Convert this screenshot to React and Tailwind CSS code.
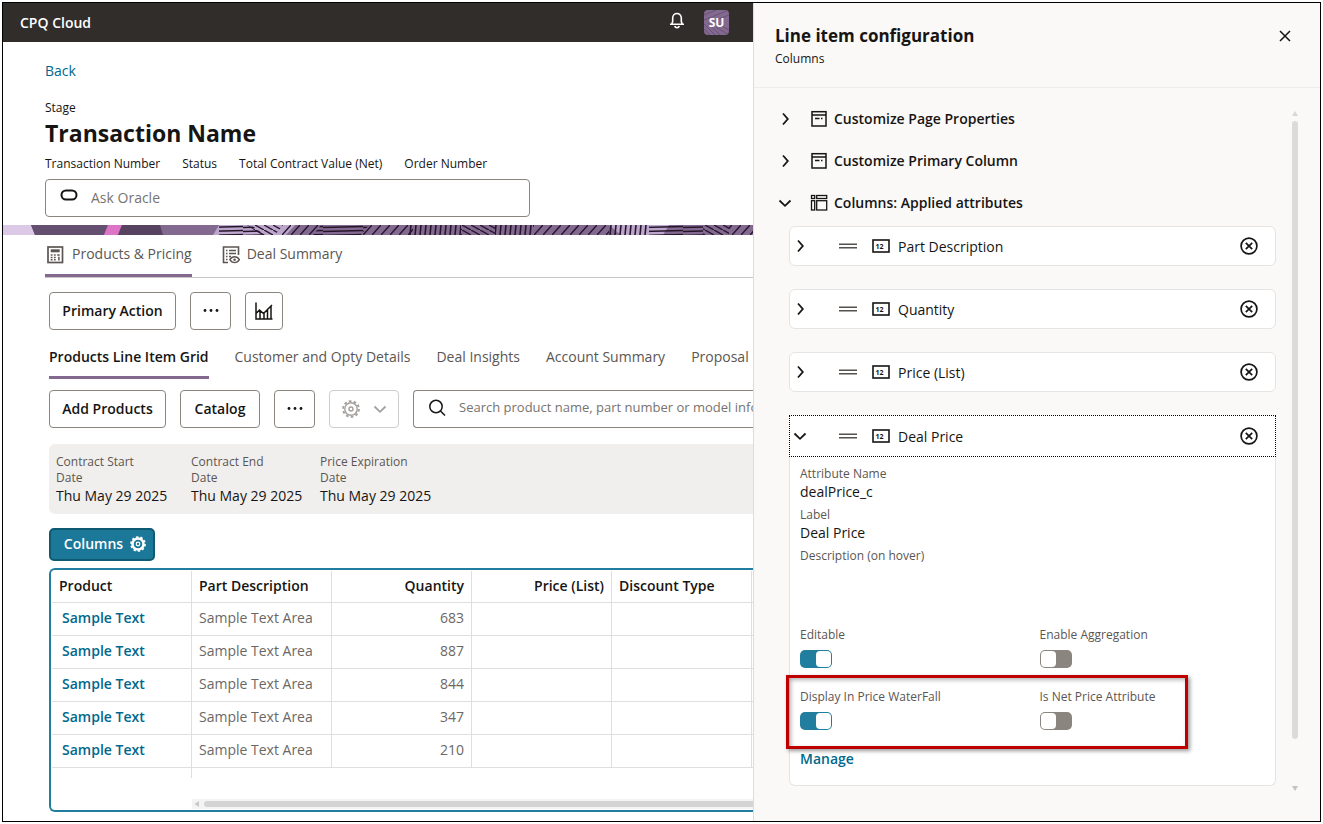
import { useState } from 'react';

const LINE_ITEMS = [683, 887, 844, 347, 210];

const DATES = [
  { label: 'Contract Start Date', value: 'Thu May 29 2025' },
  { label: 'Contract End Date', value: 'Thu May 29 2025' },
  { label: 'Price Expiration Date', value: 'Thu May 29 2025' },
];

const SUB_TABS = [
  'Products Line Item Grid',
  'Customer and Opty Details',
  'Deal Insights',
  'Account Summary',
  'Proposal',
];

function ChevronIcon({ open, className = '' }) {
  return (
    <svg viewBox="0 0 14 14" className={`w-[14px] h-[14px] shrink-0 ${className}`} fill="none" stroke="currentColor" strokeWidth="1.8">
      <path d={open ? 'M1.5 4.5 7 9.8l5.5-5.3' : 'M5 1.5 9.800 7 5 12.500'} />
    </svg>
  );
}

function GearIcon({ className, ring = 1.4 }) {
  return (
    <svg viewBox="0 0 18 18" className={className} fill="none" stroke="currentColor">
      <circle cx="9" cy="9" r="7.9" strokeWidth="1.9" strokeDasharray="2.7 2.264" />
      <circle cx="9" cy="9" r="6.2" strokeWidth={ring} />
      <circle cx="9" cy="9" r="2" strokeWidth="1.4" />
    </svg>
  );
}

function MoreIcon() {
  return (
    <svg viewBox="0 0 18 18" className="w-[18px] h-[18px]" fill="currentColor">
      <circle cx="3" cy="8.5" r="1.4" />
      <circle cx="9" cy="8.5" r="1.4" />
      <circle cx="15" cy="8.5" r="1.4" />
    </svg>
  );
}

function ChartIcon() {
  return (
    <svg viewBox="0 0 18 18" className="w-[18px] h-[18px]" fill="none" stroke="currentColor" strokeWidth="1.5">
      <path d="M1 .5V17h16.5M1 11.5l3.5-3.5 4 3.5L17 3M5 8.5V17M9 11v6M12.500 8v9M16 4v13" />
    </svg>
  );
}

function CalculatorIcon() {
  return (
    <svg viewBox="0 0 18 18" className="w-[18px] h-[18px]" fill="none" stroke="currentColor">
      <rect x="2" y="1" width="14.5" height="15.5" strokeWidth="1.7" />
      <rect x="4.700" y="3.300" width="9" height="3" fill="currentColor" stroke="none" />
      <path d="M4.700 9h1.800M7.900 9h1.800M4.700 11.400h1.800M7.900 11.400h1.800M4.700 13.800h1.800M7.900 13.800h1.800M11.200 9h2.500M12.900 10.800v3.800" strokeWidth="1.500" />
    </svg>
  );
}

function SummaryIcon() {
  return (
    <svg viewBox="0 0 18 18" className="w-[18px] h-[18px]" fill="none" stroke="currentColor" strokeWidth="1.6">
      <path d="M6 16.500H1.500V1h15v8" />
      <path d="M4 4.500h1.500M7 4.500h7M4 7.500h1.500M7 7.500h7M4 10.500h1.500M7 10.500h2M4 13.500h1.500" strokeWidth="1.500" />
      <path d="M7.800 13.700c1.300-2 2.900-2.900 4.800-2.900s3.500.9 4.800 2.900c-1.300 2-2.900 2.900-4.800 2.900s-3.500-.9-4.800-2.900z" strokeWidth="1.400" />
      <circle cx="12.600" cy="13.700" r="1.300" fill="currentColor" stroke="none" />
    </svg>
  );
}

function PageIcon() {
  return (
    <svg viewBox="0 0 18 18" className="w-[18px] h-[18px] shrink-0" fill="none" stroke="currentColor" strokeWidth="1.5">
      <rect x="2" y="1.700" width="14" height="14.300" />
      <path d="M2 5h14M5 8.500h4.500M11 8.500h1.500" />
    </svg>
  );
}

function ColumnsIcon() {
  return (
    <svg viewBox="0 0 18 18" className="w-[18px] h-[18px] shrink-0" fill="none" stroke="currentColor" strokeWidth="1.3">
      <rect x="1.500" y="1.500" width="3.200" height="3" />
      <rect x="1.500" y="6.700" width="3.200" height="9.300" />
      <rect x="6.700" y="1.500" width="10" height="3" />
      <rect x="6.700" y="6.700" width="10" height="9.300" />
    </svg>
  );
}

function NumberIcon() {
  return (
    <svg viewBox="0 0 18 14" className="w-[18px] h-[14px] shrink-0">
      <rect x="1" y="1" width="16" height="12" fill="none" stroke="currentColor" strokeWidth="1.6" />
      <text x="3.500" y="9.500" fontSize="7" fontWeight="700" fill="currentColor">12</text>
    </svg>
  );
}

function BannerStrip() {
  return (
    <svg className="block w-full h-[10px]" viewBox="0 0 750 10" preserveAspectRatio="xMinYMin slice">
      <defs>
        <pattern id="slant" width="9" height="10" patternUnits="userSpaceOnUse">
          <path d="M0 10 9 0" stroke="#24152b" strokeWidth="1.5" />
        </pattern>
        <pattern id="upright" width="5" height="10" patternUnits="userSpaceOnUse">
          <path d="M2 10 3 0" stroke="#24152b" strokeWidth="1.6" />
        </pattern>
        <pattern id="flat" width="40" height="4" patternUnits="userSpaceOnUse">
          <path d="M0 2.500 40 1.500" stroke="#24152b" strokeWidth="1.3" />
        </pattern>
        <pattern id="back" width="9" height="5" patternUnits="userSpaceOnUse">
          <path d="M0 0 9 5" stroke="#24152b" strokeWidth="1.4" />
        </pattern>
      </defs>
      <rect width="750" height="10" fill="#83688f" />
      <path d="M0 0h28l4 10H0z" fill="#dcc9e6" />
      <path d="M28 0h77l-4 10H32z" fill="#654f70" />
      <path d="M105 0h14l-4 10h-14z" fill="#dd75c6" />
      <path d="M119 0h38l3 10h-45z" fill="#574360" />
      <path d="M216 0h76l-9 10h-73z" fill="#bda6cb" />
      <path d="M216 0h32l14 10h-46z" fill="url(#flat)" />
      <path d="M244 0h36l-8 10h-14z" fill="url(#back)" />
      <path d="M280 0h38l-8 10h-38z" fill="url(#slant)" />
      <path d="M318 0h48l-8 10h-48z" fill="url(#flat)" />
      <path d="M366 0h44v10h-52z" fill="url(#slant)" />
      <path d="M404 0h54v10h-54z" fill="url(#upright)" />
      <path d="M458 0h34v10h-34z" fill="url(#back)" />
      <path d="M492 0h38v10h-38z" fill="url(#upright)" />
      <path d="M530 0h76v10h-76z" fill="url(#slant)" />
      <path d="M606 0h60l-6 10h-42z" fill="#bda6cb" />
      <path d="M606 0h40v10h-40z" fill="url(#upright)" />
      <path d="M646 0h54v10h-54z" fill="url(#flat)" />
      <path d="M700 0h26v10h-26z" fill="url(#back)" />
      <path d="M726 0h24v10h-24z" fill="url(#slant)" />
    </svg>
  );
}

function OutlineButton({ label, className = '', children }) {
  return (
    <button
      aria-label={label}
      className={`h-[38px] pb-px shrink-0 flex items-center justify-center rounded border border-[#8b8580] bg-white font-semibold ${className}`}
    >
      {children}
    </button>
  );
}

function AppHeader() {
  return (
    <header className="h-[39px] flex items-center bg-[#312d2a] text-white pl-[17px] pr-6">
      <span className="font-semibold flex-1">CPQ Cloud</span>
      <button aria-label="Notifications" className="mr-[18px] mb-1">
        <svg viewBox="0 0 18 18" className="w-[18px] h-[18px]" fill="none" stroke="currentColor" strokeWidth="1.6">
          <path d="M2 12.300h14M3.800 12.300l.9-3V5.800a4.300 4.300 0 0 1 8.600 0v3.500l.9 3M6.700 14a2.400 2.400 0 0 0 4.600 0" />
        </svg>
      </button>
      <button className="relative w-[25px] h-[25px] rounded bg-[#83688f] text-[12px] font-bold overflow-hidden">
        <svg viewBox="0 0 25 25" className="absolute inset-0" fill="none" stroke="#6a5275" strokeWidth="1">
          <path d="M0 5 12 0M0 10 25 0M12 10l13-5M0 14l11 11M0 19l6 6M4 13l12 12M12 17l13 8M14 14l11 6" />
        </svg>
        <span className="relative">SU</span>
      </button>
    </header>
  );
}

function LineItemTable() {
  const cell = 'border-r border-b border-[#e1dfdd] pt-0 pb-[3px] px-[7px]';
  const head = 'border-r border-b border-[#e1dfdd] pt-0 pb-[2px] px-[7px] font-semibold';
  return (
    <div className="mt-[7px] ml-1 h-[244px] border-2 border-r-0 border-[#227e9e] rounded-l-md p-px pr-0 flex flex-col overflow-hidden">
      <table className="w-[840px] table-fixed border-separate border-spacing-0 shrink-0">
        <thead>
          <tr className="h-8 text-left">
            <th className={head}>Product</th>
            <th className={head}>Part Description</th>
            <th className={`${head} text-right`}>Quantity</th>
            <th className={`${head} text-right`}>Price (List)</th>
            <th className={head}>Discount Type</th>
            <th className={head} />
          </tr>
        </thead>
        <tbody className="text-[#6b6864]">
          {LINE_ITEMS.map((quantity) => (
            <tr key={quantity} className="h-[33px]">
              <td className={`${cell} pl-[10px]`}>
                <a href="#item" className="font-semibold text-[#00688c]">Sample Text</a>
              </td>
              <td className={cell}>Sample Text Area</td>
              <td className={`${cell} text-right`}>{quantity}</td>
              <td className={cell} />
              <td className={cell} />
              <td className={cell} />
            </tr>
          ))}
        </tbody>
      </table>
      <div className="w-[140px] h-[10px] border-r border-[#e1dfdd]" />
      <div className="mt-auto ml-[140px] h-[10px] flex items-center bg-[#f4f4f4]">
        <svg viewBox="0 0 12 10" className="w-3 h-[10px] shrink-0" fill="#c8c8c8">
          <path d="M7 2v6L2.500 5z" />
        </svg>
        <div className="flex-1 h-[6px] rounded-l-full bg-[#d4d4d4]" />
      </div>
    </div>
  );
}

function TransactionPage() {
  return (
    <main className="pt-[19px] pb-[9px]">
      <div className="pl-[42px]">
        <a href="#back" className="block w-fit leading-5 font-medium text-[#00688c]">Back</a>
        <div className="mt-[18px] text-[12px] leading-[18px] font-medium">Stage</div>
        <h1 className="text-[23px] leading-8 font-bold">Transaction Name</h1>
        <div className="mt-[6px] flex gap-[22px] text-[12px] leading-[18px]">
          <span>Transaction Number</span>
          <span>Status</span>
          <span>Total Contract Value (Net)</span>
          <span>Order Number</span>
        </div>
        <label className="mt-[6px] w-[485px] max-w-full h-[38px] pb-[2px] flex items-center rounded border border-[#8b8580] pl-[14px] gap-[13px]">
          <svg viewBox="0 0 18 12" className="w-[18px] h-3 mb-1" fill="none" stroke="currentColor" strokeWidth="2">
            <rect x="1.5" y="1.5" width="15" height="9" rx="4.5" />
          </svg>
          <input aria-label="Ask Oracle" placeholder="Ask Oracle" className="flex-1 outline-none placeholder:text-[#77736f]" />
        </label>
      </div>

      <div className="mt-2"><BannerStrip /></div>

      <div className="pl-[42px]">
        <nav className="flex gap-[30px] border-b border-[#c9c7c5] font-medium text-[#5b5652]">
          <a href="#products" className="h-[42px] pt-[9px] flex items-start gap-2 border-b-3 border-[#83688f]">
            <span className="pl-px pt-[2px]"><CalculatorIcon /></span>
            <span className="leading-5">Products &amp; Pricing</span>
          </a>
          <a href="#summary" className="h-[42px] pt-[9px] flex items-start gap-[7px]">
            <span className="pt-[2px]"><SummaryIcon /></span>
            <span className="leading-5">Deal Summary</span>
          </a>
        </nav>

        <div className="mt-[14px] ml-1 flex gap-[14px]">
          <OutlineButton className="w-[127px]">Primary Action</OutlineButton>
          <OutlineButton label="More actions" className="w-[41px]"><MoreIcon /></OutlineButton>
          <OutlineButton label="Price chart" className="w-[38px]"><ChartIcon /></OutlineButton>
        </div>

        <nav className="mt-[17px] ml-1 flex gap-[26px] leading-5 whitespace-nowrap">
          {SUB_TABS.map((tab, i) => (
            <a
              key={tab}
              href="#tab"
              className={i === 0
                ? 'pb-[9px] border-b-3 border-[#83688f] font-semibold'
                : 'pb-[9px] border-b-3 border-transparent font-medium text-[#5b5652]'}
            >
              {tab}
            </a>
          ))}
        </nav>

        <div className="mt-[11px] ml-1 flex gap-[14px]">
          <OutlineButton className="w-[117px]">Add Products</OutlineButton>
          <OutlineButton className="w-20">Catalog</OutlineButton>
          <OutlineButton label="More actions" className="w-[41px]"><MoreIcon /></OutlineButton>
          <button aria-label="Grid settings" disabled className="w-[70px] h-[38px] shrink-0 flex items-center justify-center gap-[13px] rounded border border-[#d0cecc] text-[#a3a09d]">
            <GearIcon className="w-[18px] h-[18px]" />
            <ChevronIcon open />
          </button>
          <label className="flex-1 min-w-0 h-[38px] pb-[2px] flex items-center gap-[13px] rounded-l border border-r-0 border-[#8b8580] pl-[14px] overflow-hidden">
            <svg viewBox="0 0 18 18" className="w-[18px] h-[18px] shrink-0" fill="none" stroke="currentColor" strokeWidth="1.5">
              <circle cx="8" cy="7.5" r="6.2" />
              <path d="m12.500 12 4.500 4.500" />
            </svg>
            <input
              aria-label="Search products"
              placeholder="Search product name, part number or model information"
              className="flex-1 min-w-0 text-[13px] outline-none placeholder:text-[#77736f]"
            />
          </label>
        </div>

        <dl className="mt-4 ml-1 h-[70px] grid grid-cols-[135px_129px_auto] rounded-l-md bg-[#f1efed] pt-[10px] pl-[7px]">
          {DATES.map(({ label, value }) => (
            <div key={label}>
              <dt className="max-w-[100px] text-[12px] leading-4 text-[#5b5652]">{label}</dt>
              <dd className="leading-5">{value}</dd>
            </div>
          ))}
        </dl>

        <button className="mt-[14px] ml-1 w-[106px] h-[33px] pl-[6px] pb-[2px] flex items-center justify-center gap-[7px] rounded-[5px] border-2 border-[#0f5a73] bg-[#1b7898] text-white font-semibold">
          Columns
          <GearIcon className="w-4 h-4" ring="2.8" />
        </button>

        <LineItemTable />
      </div>
    </main>
  );
}

function Section({ icon, title, open }) {
  return (
    <button aria-expanded={open} className="h-[42px] pb-px flex items-center text-left pl-6">
      <ChevronIcon open={open} />
      <span className="ml-[18px] mr-[6px]">{icon}</span>
      <span className="font-semibold">{title}</span>
    </button>
  );
}

function AttributeRow({ name, open, className }) {
  return (
    <div className={`flex items-center pl-[3px] pr-[17px] bg-white ${className}`}>
      <button aria-label={`Toggle ${name}`} aria-expanded={open}><ChevronIcon open={open} /></button>
      <svg viewBox="0 0 18 6" className="ml-8 w-[18px] h-[6px] mb-px" stroke="#55514e" strokeWidth="1.5">
        <path d="M0 1.300h18M0 4.800h18" />
      </svg>
      <span className="ml-[15px]"><NumberIcon /></span>
      <span className="ml-2 flex-1">{name}</span>
      <button aria-label={`Remove ${name}`}>
        <svg viewBox="0 0 18 18" className="w-[18px] h-[18px]" fill="none" stroke="currentColor" strokeWidth="1.7">
          <circle cx="9" cy="9" r="7.9" />
          <path d="m5.800 5.800 6.400 6.400M12.200 5.800l-6.400 6.400" />
        </svg>
      </button>
    </div>
  );
}

function Switch({ id, label, defaultOn = false }) {
  const [on, setOn] = useState(defaultOn);
  return (
    <div className="flex flex-col items-start">
      <label htmlFor={id} className="text-[12px] leading-[18px] font-medium text-[#5b5652]">{label}</label>
      <input
        id={id}
        type="checkbox"
        role="switch"
        checked={on}
        onChange={(e) => setOn(e.target.checked)}
        className="mt-[6px] block w-8 h-[18px] appearance-none rounded-[5px] bg-[#8b8580] p-px checked:bg-[#227e9e] before:block before:w-[15px] before:h-4 before:rounded before:bg-white checked:before:ml-auto"
      />
    </div>
  );
}

function Detail({ label, value }) {
  return (
    <div className="leading-[18px]">
      <dt className="text-[12px] font-medium text-[#5b5652]">{label}</dt>
      <dd className="min-h-[18px]">{value}</dd>
    </div>
  );
}

function ConfigPanel() {
  return (
    <aside className="w-[567px] shrink-0 flex flex-col border-l border-[#dedbd8] bg-[#faf9f8]">
      <div className="h-[85px] flex justify-between items-start border-b border-[#efedeb] pt-5 pl-[21px] pr-7">
        <div>
          <h2 className="text-[17px] leading-[26px] font-bold">Line item configuration</h2>
          <p className="text-[12px] leading-5">Columns</p>
        </div>
        <button aria-label="Close" className="mt-[6px]">
          <svg viewBox="0 0 14 14" className="w-[14px] h-[14px]" fill="none" stroke="currentColor" strokeWidth="1.5">
            <path d="m2 2 10 10M12 2 2 12" />
          </svg>
        </button>
      </div>

      <div className="flex flex-1 pt-[10px] pr-[22px]">
        <div className="flex-1 flex flex-col">
          <Section icon={<PageIcon />} title="Customize Page Properties" open={false} />
          <Section icon={<PageIcon />} title="Customize Primary Column" open={false} />
          <Section icon={<ColumnsIcon />} title="Columns: Applied attributes" open />

          <div className="mt-[2px] ml-[35px] mr-4 flex flex-col gap-[23px]">
            <AttributeRow name="Part Description" open={false} className="h-10 border border-[#e6e4e2] rounded-md" />
            <AttributeRow name="Quantity" open={false} className="h-10 border border-[#e6e4e2] rounded-md" />
            <AttributeRow name="Price (List)" open={false} className="h-10 border border-[#e6e4e2] rounded-md" />
            <div>
              <AttributeRow name="Deal Price" open className="h-[42px] border border-dotted border-black" />
              <div className="border border-t-0 border-[#e6e4e2] rounded-b-md bg-white pt-2 pb-4 pl-[10px]">
                <dl className="flex flex-col gap-[5px]">
                  <Detail label="Attribute Name" value="dealPrice_c" />
                  <Detail label="Label" value="Deal Price" />
                  <Detail label="Description (on hover)" value="" />
                </dl>
                <div className="mt-[43px] grid grid-cols-2 gap-x-1">
                  <Switch id="editable" label="Editable" defaultOn />
                  <Switch id="aggregation" label="Enable Aggregation" />
                </div>
                <div className="relative mt-5 grid grid-cols-2 gap-x-1">
                  <Switch id="waterfall" label="Display In Price WaterFall" defaultOn />
                  <Switch id="net-price" label="Is Net Price Attribute" />
                  <div className="absolute -left-[14px] -top-[13px] -bottom-[19px] w-[402px] border-3 border-[#bf0000] pointer-events-none shadow-[2px_2px_4px_rgba(0,0,0,0.4),inset_2px_2px_4px_rgba(0,0,0,0.3)]" />
                </div>
                <a href="#manage" className="mt-[19px] block w-fit leading-5 font-semibold text-[#00688c]">Manage</a>
              </div>
            </div>
          </div>
        </div>

        <div className="w-[6px] flex flex-col items-center pt-[13px] pb-[30px]">
          <svg viewBox="0 0 6 5" className="w-[6px] h-[5px]" fill="#d9d8d6"><path d="M0 5h6L3 0z" /></svg>
          <div className="mt-[5px] w-[6px] h-[618px] rounded-full bg-[#dcdbd9]" />
          <svg viewBox="0 0 6 5" className="mt-auto w-[6px] h-[5px]" fill="#c4c3c1"><path d="M0 0h6L3 5z" /></svg>
        </div>
      </div>
    </aside>
  );
}

export default function App() {
  return (
    <div className="min-h-screen p-[2px] flex bg-white font-['Open_Sans',sans-serif] text-[14px] text-[#161513]">
      <div className="flex-1 min-w-0 flex border border-black">
        <div className="flex-1 min-w-0 overflow-hidden">
          <AppHeader />
          <TransactionPage />
        </div>
        <ConfigPanel />
      </div>
    </div>
  );
}
